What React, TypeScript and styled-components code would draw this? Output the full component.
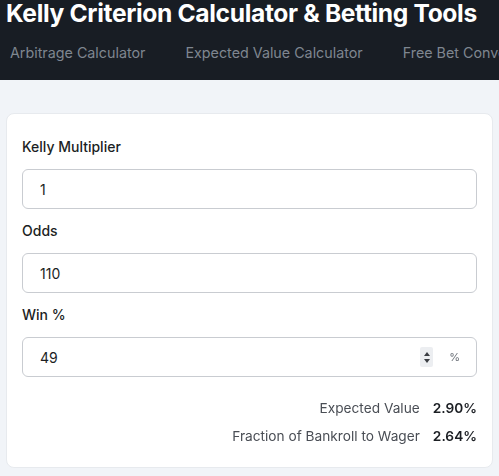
import React, { useState } from 'react';
import styled, { createGlobalStyle } from 'styled-components';

const GlobalStyle = createGlobalStyle`
  html, body {
    margin: 0;
    padding: 0;
    background: #f1f4f8;
    font-family: Inter, "Noto Sans", "Liberation Sans", sans-serif;
    overflow: hidden;
  }
`;

const Header = styled.header`
  background: #181d24;
  height: 80px;
  padding: 0 6px;
  box-sizing: border-box;
  overflow: hidden;
`;

const Title = styled.h1`
  margin: 0;
  font-size: 24.6px;
  line-height: 27px;
  font-weight: 700;
  color: #ffffff;
  white-space: nowrap;
  letter-spacing: -0.35px;
`;

const Nav = styled.nav`
  display: flex;
  gap: 40px;
  margin-top: 14px;
  padding-left: 4px;
  white-space: nowrap;
`;

const NavLink = styled.a`
  font-size: 14.3px;
  line-height: 24px;
  color: #7f8690;
  text-decoration: none;
  flex-shrink: 0;
`;

const Main = styled.main`
  padding: 33px 6px 0;
`;

const Card = styled.section`
  background: #ffffff;
  border: 1px solid #e7eaee;
  border-radius: 8px;
  padding: 21px 15px 19px;
  display: flex;
  flex-direction: column;
  gap: 10px;
`;

const Field = styled.div`
  display: flex;
  flex-direction: column;
  gap: 10px;
`;

const Label = styled.label`
  font-size: 14px;
  line-height: 24px;
  font-weight: 500;
  color: #1c1f24;
`;

const InputBox = styled.div`
  display: flex;
  align-items: center;
  height: 40px;
  box-sizing: border-box;
  border: 1px solid #c9ccd1;
  border-radius: 6px;
  padding: 0 16px 0 17px;
  background: #ffffff;
`;

const Input = styled.input`
  flex: 1;
  min-width: 0;
  border: none;
  outline: none;
  padding: 0;
  font: inherit;
  font-size: 14px;
  color: #1c1f24;
  background: transparent;
  caret-color: #1c1f24;
`;

const Spinner = styled.span`
  display: flex;
  flex-direction: column;
  align-items: center;
  justify-content: center;
  gap: 3px;
  width: 13px;
  height: 20px;
  background: #eceef1;
  border-radius: 2px;
`;

const Arrow = styled.span<{ $down?: boolean }>`
  width: 0;
  height: 0;
  border-left: 3.5px solid transparent;
  border-right: 3.5px solid transparent;
  ${(p) => (p.$down ? 'border-top: 4px solid #3a3d42;' : 'border-bottom: 4px solid #3a3d42;')}
`;

const Unit = styled.span`
  margin-left: 16px;
  font-size: 11px;
  color: #6b7078;
`;

const Results = styled.div`
  display: flex;
  flex-direction: column;
  gap: 4px;
  margin-top: 9px;
`;

const ResultRow = styled.div`
  display: flex;
  justify-content: flex-end;
  align-items: center;
  gap: 13px;
  font-size: 13.7px;
  line-height: 24px;
`;

const ResultLabel = styled.span`
  color: #4a4e55;
`;

const ResultValue = styled.span`
  font-weight: 600;
  color: #1c1f24;
`;

function App(): JSX.Element {
  const [multiplier, setMultiplier] = useState('1');
  const [odds, setOdds] = useState('110');
  const [win, setWin] = useState('49');

  return (
    <>
      <GlobalStyle />
      <Header>
        <Title>Kelly Criterion Calculator &amp; Betting Tools</Title>
        <Nav>
          <NavLink href="#">Arbitrage Calculator</NavLink>
          <NavLink href="#">Expected Value Calculator</NavLink>
          <NavLink href="#">Free Bet Converter</NavLink>
        </Nav>
      </Header>
      <Main>
        <Card>
          <Field>
            <Label htmlFor="multiplier">Kelly Multiplier</Label>
            <InputBox>
              <Input id="multiplier" value={multiplier} onChange={(e) => setMultiplier(e.target.value)} />
            </InputBox>
          </Field>
          <Field>
            <Label htmlFor="odds">Odds</Label>
            <InputBox>
              <Input id="odds" value={odds} onChange={(e) => setOdds(e.target.value)} />
            </InputBox>
          </Field>
          <Field>
            <Label htmlFor="win">Win %</Label>
            <InputBox>
              <Input id="win" autoFocus value={win} onChange={(e) => setWin(e.target.value)} />
              <Spinner>
                <Arrow />
                <Arrow $down />
              </Spinner>
              <Unit>%</Unit>
            </InputBox>
          </Field>
          <Results>
            <ResultRow>
              <ResultLabel>Expected Value</ResultLabel>
              <ResultValue>2.90%</ResultValue>
            </ResultRow>
            <ResultRow>
              <ResultLabel>Fraction of Bankroll to Wager</ResultLabel>
              <ResultValue>2.64%</ResultValue>
            </ResultRow>
          </Results>
        </Card>
      </Main>
    </>
  );
}

export default App;
